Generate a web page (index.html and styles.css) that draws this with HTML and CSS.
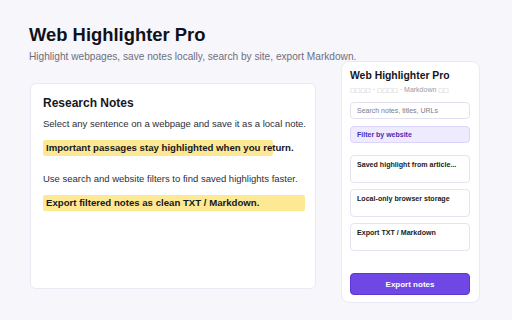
FILE: index.html
```html
<!DOCTYPE html>
<html lang="en">
<head>
<meta charset="utf-8">
<title>Web Highlighter Pro</title>
<link rel="stylesheet" href="styles.css">
</head>
<body>
<div class="page">
  <header class="hero">
    <h1 class="hero-title">Web Highlighter Pro</h1>
    <p class="hero-sub">Highlight webpages, save notes locally, search by site, export Markdown.</p>
  </header>

  <section class="notes-card">
    <h2 class="notes-title">Research Notes</h2>
    <p class="notes-text">Select any sentence on a webpage and save it as a local note.</p>
    <div class="mark mark-short">Important passages stay highlighted when you return.</div>
    <p class="notes-text notes-text-gap">Use search and website filters to find saved highlights faster.</p>
    <div class="mark mark-full">Export filtered notes as clean TXT / Markdown.</div>
  </section>

  <aside class="panel">
    <div class="panel-title">Web Highlighter Pro</div>
    <div class="panel-sub"><span class="tofu">□□□□</span> · <span class="tofu">□□□□</span> · Markdown <span class="tofu">□□</span></div>
    <div class="search">Search notes, titles, URLs</div>
    <div class="filter">Filter by website</div>
    <div class="item item-first">Saved highlight from article...</div>
    <div class="item">Local-only browser storage</div>
    <div class="item">Export TXT / Markdown</div>
    <button class="export">Export notes</button>
  </aside>
</div>
</body>
</html>
```

FILE: styles.css
```css
* { box-sizing: border-box; }

html, body {
  margin: 0;
  padding: 0;
  background: #f7f6fb;
  font-family: "Liberation Sans", Arial, sans-serif;
  color: #16161d;
}

.page {
  display: grid;
  grid-template-columns: 286px 139px;
  grid-template-rows: 39px auto;
  column-gap: 25px;
  padding: 24px 0 0 30px;
  align-items: start;
}

.hero {
  grid-column: 1;
  grid-row: 1;
  margin-left: -1px;
  white-space: nowrap;
}

.hero-title {
  margin: 0;
  font-size: 18.4px;
  line-height: 22px;
  font-weight: 700;
  color: #111119;
}

.hero-sub {
  margin: 5px 0 0;
  font-size: 10.15px;
  line-height: 12px;
  color: #6e6e7b;
}

.notes-card {
  grid-column: 1;
  grid-row: 2;
  margin-top: 20px;
  height: 206px;
  background: #ffffff;
  border: 1px solid #ebe9f3;
  border-radius: 6px;
  padding: 11px 12px;
}

.notes-title {
  margin: 0;
  font-size: 12px;
  line-height: 16px;
  font-weight: 700;
  color: #17171f;
}

.notes-text {
  margin: 6px 0 0;
  font-size: 9.5px;
  line-height: 14px;
  color: #2e2e38;
  white-space: nowrap;
}

.notes-text-gap { margin-top: 16px; }

.mark {
  margin-top: 9px;
  height: 16px;
  line-height: 16px;
  padding-left: 3px;
  font-size: 9.65px;
  font-weight: 700;
  color: #17171c;
  background: #fde994;
  border-radius: 2px;
  white-space: nowrap;
}

.mark-short { width: 230px; }
.mark-full { width: 262px; }

.panel {
  grid-row: 1 / 3;
  grid-column: 2;
  margin-top: 37px;
  height: 242px;
  background: #ffffff;
  border: 1px solid #ebe9f3;
  border-radius: 8px;
  padding: 7px 9px 7px 8px;
  display: flex;
  flex-direction: column;
}

.panel-title {
  font-size: 10.4px;
  line-height: 13px;
  font-weight: 700;
  color: #15151c;
}

.panel-sub {
  margin-top: 3px;
  font-size: 7px;
  line-height: 10px;
  color: #9a9aa6;
  white-space: nowrap;
}

.tofu {
  font-family: "DejaVu Sans", sans-serif;
  font-size: 5.5px;
  color: #b8b8c2;
}

.search {
  margin-top: 7px;
  height: 17px;
  line-height: 15px;
  padding-left: 6px;
  font-size: 7px;
  color: #7c7c88;
  border: 1px solid #e4e1ef;
  border-radius: 4px;
  background: #ffffff;
}

.filter {
  margin-top: 7px;
  height: 17px;
  line-height: 15px;
  padding-left: 6px;
  font-size: 7px;
  font-weight: 700;
  color: #4a2bb6;
  background: #efebfe;
  border: 1px solid #dcd4fa;
  border-radius: 4px;
}

.item {
  margin-top: 6px;
  height: 28px;
  padding: 4px 6px 0;
  font-size: 7.1px;
  line-height: 10px;
  font-weight: 700;
  color: #1b1b22;
  border: 1px solid #e6e3f0;
  border-radius: 4px;
  background: #ffffff;
}

.item-first { margin-top: 12px; }

.export {
  margin-top: auto;
  height: 22px;
  width: 100%;
  border: 1px solid #5b36d3;
  border-radius: 4px;
  background: #6e47e5;
  color: #ffffff;
  font-family: "Liberation Sans", Arial, sans-serif;
  font-size: 8px;
  font-weight: 700;
  padding: 0;
}
```
